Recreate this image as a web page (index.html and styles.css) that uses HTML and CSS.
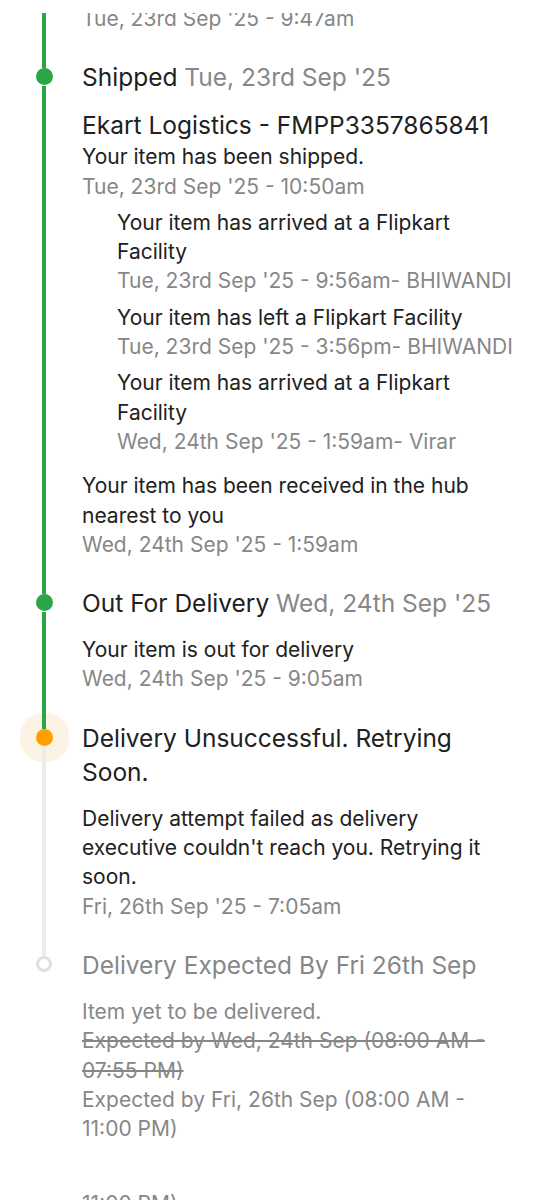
FILE: index.html
```html
<!DOCTYPE html>
<html lang="en">
<head>
  <meta charset="utf-8">
  <meta name="viewport" content="width=device-width, initial-scale=1.0">
  <title>Order Tracking</title>
  <link rel="stylesheet" href="styles.css">
</head>

<body>
  <div class="timeline">
    <div class="step">
      <div class="rail">
        <span class="stem stem-full"></span>
      </div>
      <div class="content content-clipped">
        <p class="text date">Tue, 23rd Sep '25 - 9:47am</p>
      </div>
    </div>

    <div class="step">
      <div class="rail">
        <span class="stem stem-top"></span>
        <span class="dot"></span>
        <span class="stem stem-bottom"></span>
      </div>
      <div class="content">
        <h3 class="heading">Shipped <span class="when">Tue, 23rd Sep '25</span></h3>
        <p class="carrier">Ekart Logistics - FMPP3357865841</p>
        <div class="activity activity-tight">
          <p class="text">Your item has been shipped.</p>
          <p class="text date">Tue, 23rd Sep '25 - 10:50am</p>
        </div>
        <div class="sub">
          <p class="text">Your item has arrived at a Flipkart Facility</p>
          <p class="text date">Tue, 23rd Sep '25 - 9:56am- BHIWANDI</p>
        </div>
        <div class="sub">
          <p class="text">Your item has left a Flipkart Facility</p>
          <p class="text date">Tue, 23rd Sep '25 - 3:56pm- BHIWANDI</p>
        </div>
        <div class="sub">
          <p class="text">Your item has arrived at a Flipkart Facility</p>
          <p class="text date">Wed, 24th Sep '25 - 1:59am- Virar</p>
        </div>
        <div class="activity">
          <p class="text">Your item has been received in the hub nearest to you</p>
          <p class="text date">Wed, 24th Sep '25 - 1:59am</p>
        </div>
      </div>
    </div>

    <div class="step">
      <div class="rail">
        <span class="stem stem-top"></span>
        <span class="dot"></span>
        <span class="stem stem-bottom"></span>
      </div>
      <div class="content">
        <h3 class="heading">Out For Delivery <span class="when">Wed, 24th Sep '25</span></h3>
        <div class="activity">
          <p class="text">Your item is out for delivery</p>
          <p class="text date">Wed, 24th Sep '25 - 9:05am</p>
        </div>
      </div>
    </div>

    <div class="step">
      <div class="rail">
        <span class="stem stem-top"></span>
        <span class="dot dot-current"></span>
        <span class="stem stem-bottom stem-pending"></span>
      </div>
      <div class="content">
        <h3 class="heading">Delivery Unsuccessful. Retrying Soon.</h3>
        <div class="activity">
          <p class="text">Delivery attempt failed as delivery executive couldn't reach you. Retrying it soon.</p>
          <p class="text date">Fri, 26th Sep '25 - 7:05am</p>
        </div>
      </div>
    </div>

    <div class="step step-pending">
      <div class="rail">
        <span class="stem stem-top stem-pending"></span>
        <span class="dot dot-pending"></span>
      </div>
      <div class="content">
        <h3 class="heading">Delivery Expected By Fri 26th Sep</h3>
        <div class="activity">
          <p class="text">Item yet to be delivered.</p>
          <p class="text"><s>Expected by Wed, 24th Sep (08:00 AM - 07:55 PM)</s></p>
          <p class="text">Expected by Fri, 26th Sep (08:00 AM - 11:00 PM)</p>
        </div>
      </div>
    </div>

    <p class="text date tail">11:00 PM)</p>
  </div>
</body>
</html>
```

FILE: styles.css
```css
:root {
  --green: #2aa647;
  --orange: #ff9f00;
  --halo: #fdf3e4;
  --text-color: #212121;
  --muted: #878787;
  --track: #ececec;
}

body {
  margin: 0;
  font-family: Inter, "Noto Sans", sans-serif;
  color: var(--text-color);
  background: #fff;
}

p, h3 {
  margin: 0;
  font-weight: 400;
}

.timeline {
  margin-top: 13px;
  padding-right: 42px;
  height: 1187px;
  overflow: hidden;
}

.step {
  display: grid;
  grid-template-columns: 82px 1fr;
}

.rail {
  display: flex;
  flex-direction: column;
  align-items: center;
  padding-left: 6px;
}

.stem {
  width: 4px;
  background: var(--green);
  position: relative;
  z-index: 1;
}

.stem-full {
  flex: 1;
}

.stem-top {
  height: 35px;
  flex: none;
}

.stem-bottom {
  flex: 1;
  margin-top: 1px;
}

.stem-pending {
  background: var(--track);
}

.dot {
  flex: none;
  width: 17px;
  height: 17px;
  border-radius: 50%;
  background: var(--green);
}

.dot-current {
  background: var(--orange);
  box-shadow: 0 0 0 16px var(--halo);
}

.dot-pending {
  width: 16px;
  height: 16px;
  box-sizing: border-box;
  background: #fff;
  border: 3px solid #e0e0e0;
}

.content {
  padding-top: 27px;
}

.content-clipped {
  padding-top: 0;
  margin-top: -9px;
}

.heading {
  font-size: 24.5px;
  line-height: 34px;
}

.when {
  color: var(--muted);
}

.carrier {
  font-size: 24.5px;
  line-height: 34px;
  margin-top: 14px;
}

.text {
  font-size: 21px;
  line-height: 29.3px;
}

.date {
  color: var(--muted);
}

.activity {
  margin-top: 15px;
}

.activity-tight {
  margin-top: 0;
}

.sub {
  padding-left: 35px;
  margin-top: 7px;
}

.step-pending .heading,
.step-pending .text {
  color: var(--muted);
}

.tail {
  padding-left: 82px;
  margin-top: 46px;
}
```
